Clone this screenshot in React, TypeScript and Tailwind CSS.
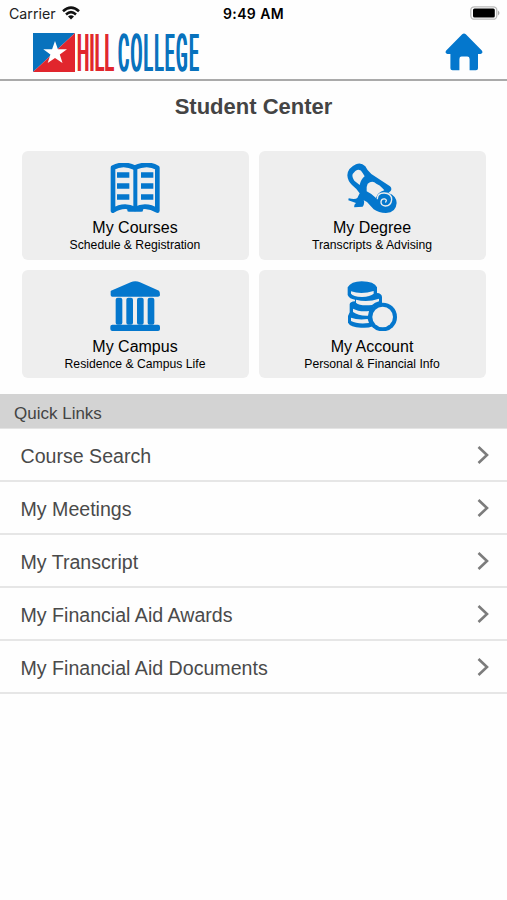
const BookIcon = () => (
  <svg viewBox="0 0 150 150" className="h-[50px] w-[50px]">
    <path
      d="M9 143V14Q40-3 74 14Q112-3 142 14V143Q110 122 75 138Q40 122 9 143Z"
      fill="#eee"
      stroke="#0477cd"
      strokeWidth="14"
      strokeLinejoin="round"
    />
    <path d="M76 12V142" stroke="#0477cd" strokeWidth="12" />
    <path d="M58 140H93" stroke="#0477cd" strokeWidth="13" strokeLinecap="round" />
    <path
      d="M21 36H58M21 69H58M21 102H58M93 36H130M93 69H130M93 102H130"
      stroke="#0477cd"
      strokeWidth="16"
    />
  </svg>
);

const DiplomaIcon = () => (
  <svg viewBox="0 0 150 150" className="h-[50px] w-[50px]">
    <path
      d="M27 4Q42-3 55 10Q60 22 73 33L129 70Q136 76 131 84L124 90Q148 98 149 120Q147 149 117 150Q95 150 80 139L60 117L50 112Q54 121 47 131L22 133Q20 126 27 120L4 112L5 106Q25 111 31 105L38 91Q28 76 15 66Q2 54 1 37Q2 15 27 4Z"
      fill="#0477cd"
    />
    <path d="M25 24Q39 14 47 30L53 40Q41 50 38 66L22 53Q14 41 17 33Z" fill="#eee" />
    <path d="M62 62Q76 51 88 62Q99 66 105 74L112 82Q91 88 87 105L80 99Q72 92 59 85Q57 72 62 62Z" fill="#eee" />
    <path
      d="M91 107Q92 89 112 90Q134 91 134 110Q132 129 115 129Q101 127 102 116Q104 106 114 108Q121 111 116 117"
      fill="none"
      stroke="#eee"
      strokeWidth="4"
      strokeLinecap="round"
    />
  </svg>
);

const CampusIcon = () => (
  <svg viewBox="0 0 150 150" className="h-[50px] w-[50px]" fill="#0477cd">
    <path d="M3 29L62 4Q76-2 90 4L147 29Q150 32 150 43Q149 47 144 47H7Q2 47 2 42V31Z" />
    <rect x="17" y="50" width="20" height="81" rx="6" />
    <rect x="49" y="50" width="20" height="81" rx="6" />
    <rect x="81" y="50" width="20" height="81" rx="6" />
    <rect x="113" y="50" width="20" height="81" rx="6" />
    <rect x="1" y="131" width="149" height="19" rx="6" />
  </svg>
);

const CoinsIcon = () => (
  <svg viewBox="0 0 150 150" className="h-[50px] w-[50px]">
    <g fill="#0477cd">
      <path d="M2 19Q12 1 44 1Q82 1 90 19V36Q104 37 105 48V76H78V136Q62 142 42 140Q10 139 3 125V105L8 94V70Q9 62 24 61V56Q7 54 2 42Z" />
      <circle cx="107" cy="108" r="43" />
    </g>
    <g fill="#eee">
      <circle cx="107" cy="108" r="31" />
      <path d="M12 31Q43 42 80 30V38Q70 47 45 48Q18 47 12 38Z" />
      <path d="M27 56Q60 66 96 53V61Q83 64 75 72Q39 76 27 65Z" />
      <path d="M18 83Q36 93 66 90L63 104Q34 105 18 93Z" />
      <path d="M12 110Q32 118 62 114L66 126Q31 130 12 120Z" />
    </g>
  </svg>
);

const tiles = [
  { title: "My Courses", detail: "Schedule & Registration", Icon: BookIcon },
  { title: "My Degree", detail: "Transcripts & Advising", Icon: DiplomaIcon },
  { title: "My Campus", detail: "Residence & Campus Life", Icon: CampusIcon },
  { title: "My Account", detail: "Personal & Financial Info", Icon: CoinsIcon },
];

const links = [
  "Course Search",
  "My Meetings",
  "My Transcript",
  "My Financial Aid Awards",
  "My Financial Aid Documents",
];

function StatusBar() {
  return (
    <div className="grid h-7 grid-cols-3 items-center pl-[9px] pr-[7px] font-['Inter',sans-serif] text-sm text-[#222]">
      <div className="flex items-center gap-1.5">
        <span className="text-[14.2px]">Carrier</span>
        <svg viewBox="0 0 18 14" className="-mt-0.5 h-[14px] w-[18px]" fill="none" stroke="#111" strokeWidth="2.6">
          <path d="M1 5.2Q9-2 17 5.2" />
          <path d="M4 8.4Q9 4 14 8.4" />
          <path d="M9 13.5L6 10.4Q9 8.2 12 10.4Z" fill="#111" stroke="none" />
        </svg>
      </div>
      <span className="-ml-0.5 text-center text-[14px] font-semibold tracking-[0.4px] text-black">9:49 AM</span>
      <svg viewBox="0 0 30 14" className="-mt-0.5 h-[14px] w-[30px] justify-self-end">
        <rect x="0.8" y="0.8" width="26" height="12.4" rx="3.5" fill="#fff" stroke="#bbb" strokeWidth="1.3" />
        <rect x="3" y="2.6" width="21.8" height="9" rx="1.5" fill="#000" />
        <path d="M28 4.5Q31 7 28 9.5Z" fill="#aaa" />
      </svg>
    </div>
  );
}

function Logo() {
  return (
    <div className="flex h-[39px] items-center font-['Roboto',sans-serif] text-[16.5px] leading-none">
      <svg viewBox="0 0 42 39" className="h-[39px] w-[42px]">
        <path d="M0 0H42L0 39Z" fill="#0872bd" />
        <path d="M42 0V39H0Z" fill="#e1262d" />
        <path d="M22 8L24.9 16.2H34L26.8 21.5L29.5 30L22 24.9L14.7 30L17.4 21.5L10.3 16.2H19.1Z" fill="#fff" />
      </svg>
      {/* side shadows widen the stems of the stretched letters */}
      <span className="ml-[2px] mt-[7px] w-[41px] scale-y-[3.15] tracking-[0.8px] text-[#e1262d] [text-shadow:0.9px_0_#e1262d,-0.6px_0_#e1262d]">
        HILL
      </span>
      <span className="mt-[7px] scale-y-[3.15] tracking-[1.75px] text-[#0872bd] [text-shadow:0.9px_0_#0872bd,-0.6px_0_#0872bd]">
        COLLEGE
      </span>
    </div>
  );
}

export default function App() {
  return (
    <div className="min-h-[900px] w-full bg-[#fefefe] font-['Liberation_Sans',Arial,sans-serif]">
      <StatusBar />
      <header className="flex h-[53px] items-start justify-between border-b-2 border-[#aaa] pl-[33px] pr-6 pt-[5px]">
        <Logo />
        <svg viewBox="0 0 38 38" className="h-[38px] w-[38px]" fill="#0477cd">
          <path d="M17.2 1.2Q19 -0.4 20.8 1.2L36.8 17.5Q38.6 20.4 35.5 21H33V35.2Q33 37.3 31 37.3H24.6V26Q24.6 23.6 22.2 23.6H16.6Q14.4 23.6 14.4 26V37.3H7.6Q5.4 37.3 5.4 35.2V21H2.4Q-0.6 20.4 1.2 17.5Z" />
        </svg>
      </header>

      <h1 className="pt-3 text-center text-[22px] font-bold leading-[28px] text-[#444]">Student Center</h1>

      <div className="grid grid-cols-2 gap-2.5 pl-[22px] pr-[21px] pt-[30px]">
        {tiles.map(({ title, detail, Icon }) => (
          <div
            key={title}
            className="flex h-[108.5px] flex-col items-center rounded-md bg-[#eee] pr-px pt-[11.5px] text-black"
          >
            <Icon />
            <p className="mt-[4.5px] text-base leading-[22px]">{title}</p>
            <p className="text-[12.2px] leading-[13px]">{detail}</p>
          </div>
        ))}
      </div>

      <h2 className="mt-4 flex h-[35px] items-center border-b border-[#e4e4e4] bg-[#d3d3d3] pl-3.5 pt-[5px] text-[17px] text-[#444]">
        Quick Links
      </h2>
      <ul>
        {links.map((link) => (
          <li
            key={link}
            className="flex h-[53px] items-center justify-between border-b-2 border-[#e6e6e6] pl-[20.5px] pr-[18px] pt-[4px] text-[19.6px] text-[#4a4a4a]"
          >
            {link}
            <svg viewBox="0 0 12 18" className="-mt-1 h-[18px] w-3" fill="none" stroke="#7c7c7c" strokeWidth="2.6">
              <path d="M1.5 1L10 9L1.5 17" />
            </svg>
          </li>
        ))}
      </ul>
    </div>
  );
}
